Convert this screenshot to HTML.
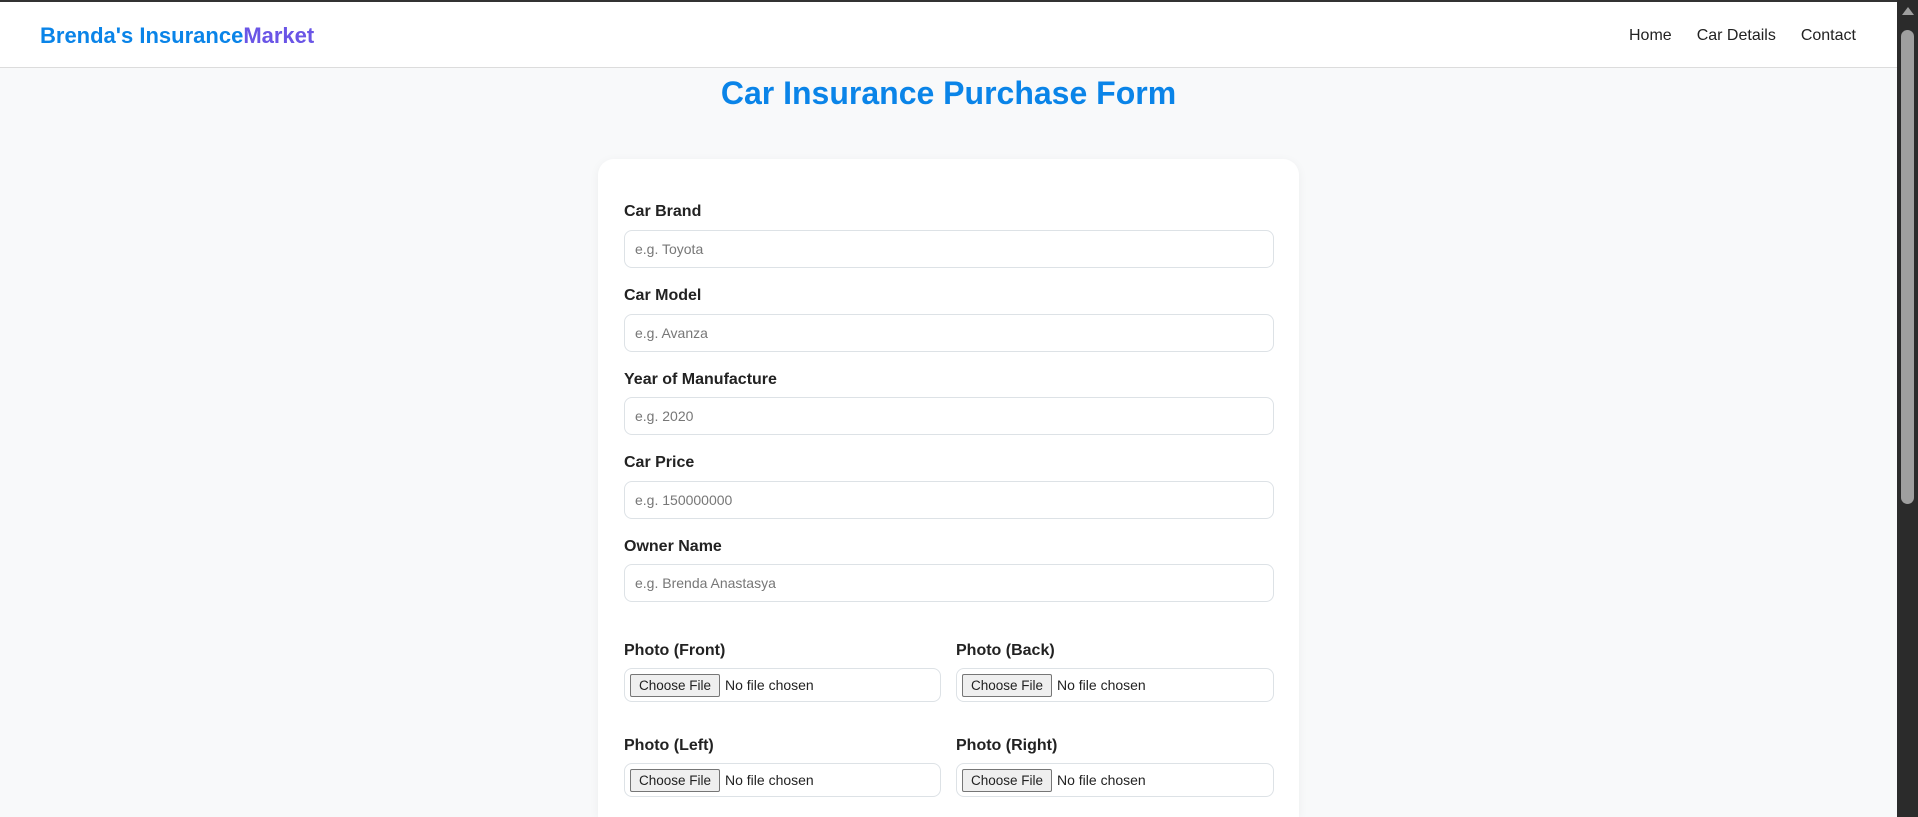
<!DOCTYPE html>
<html><head><meta charset="utf-8"><style>
*{box-sizing:border-box;margin:0;padding:0}
html,body{width:1918px;height:817px;overflow:hidden;background:#f8f9fa;font-family:"Liberation Sans",Arial,sans-serif;color:#222}
.topbar{position:absolute;left:0;top:0;width:1897px;height:2px;background:#333}
nav{position:absolute;left:0;top:2px;width:1897px;height:66px;background:#fff;border-bottom:1px solid #dcdcdc}
.logo{position:absolute;left:40px;top:21px;font-size:22px;font-weight:bold;color:#0a84e8}
.logo span{color:#6a55e6}
.links{position:absolute;top:25px;left:1629px;font-size:16px;color:#222}
.links span{margin-right:25px}
h1{position:absolute;left:0;width:1897px;top:75px;text-align:center;font-size:32px;color:#0a84e8;font-weight:bold}
.card{position:absolute;left:598px;top:159px;width:701px;height:658px;background:#fff;border-radius:16px 16px 0 0;box-shadow:0 2px 10px rgba(0,0,0,.05)}
.lbl{position:absolute;font-size:16px;font-weight:bold;color:#222}
.inp{position:absolute;height:38px;border:1px solid #dde2e6;border-radius:8px;font-size:14px;color:#777;padding:11px 10px;line-height:14px}
.file{position:absolute;height:34px;border:1px solid #dde2e6;border-radius:8px;font-size:14px;color:#222}
.btn{position:absolute;left:5px;top:5px;height:23px;width:90px;border:1px solid #767676;background:#efefef;border-radius:2px;font-size:13.5px;text-align:center;line-height:21px}
.nf{position:absolute;left:100px;top:8px;font-size:14px}
.sb{position:absolute;left:1897px;top:0;width:21px;height:817px;background:#2b2b2b}
.thumb{position:absolute;left:4px;top:30px;width:13px;height:474px;background:#9f9f9f;border-radius:7px}
.arr{position:absolute;left:5px;top:7px;width:0;height:0;border-left:6px solid transparent;border-right:6px solid transparent;border-bottom:8px solid #9f9f9f}
</style></head><body>
<div class="topbar"></div>
<nav><div class="logo">Brenda's Insurance<span>Market</span></div>
<div class="links"><span>Home</span><span>Car Details</span>Contact</div></nav>
<h1>Car Insurance Purchase Form</h1>
<div class="card">
<div class="lbl" style="left:26px;top:44px">Car Brand</div>
<div class="inp" style="left:26px;top:71px;width:650px">e.g. Toyota</div>
<div class="lbl" style="left:26px;top:128px">Car Model</div>
<div class="inp" style="left:26px;top:155px;width:650px">e.g. Avanza</div>
<div class="lbl" style="left:26px;top:212px">Year of Manufacture</div>
<div class="inp" style="left:26px;top:238px;width:650px">e.g. 2020</div>
<div class="lbl" style="left:26px;top:295px">Car Price</div>
<div class="inp" style="left:26px;top:322px;width:650px">e.g. 150000000</div>
<div class="lbl" style="left:26px;top:379px">Owner Name</div>
<div class="inp" style="left:26px;top:405px;width:650px">e.g. Brenda Anastasya</div>
<div class="lbl" style="left:26px;top:483px">Photo (Front)</div>
<div class="file" style="left:26px;top:509px;width:317px"><div class="btn">Choose File</div><div class="nf">No file chosen</div></div>
<div class="lbl" style="left:358px;top:483px">Photo (Back)</div>
<div class="file" style="left:358px;top:509px;width:318px"><div class="btn">Choose File</div><div class="nf">No file chosen</div></div>
<div class="lbl" style="left:26px;top:578px">Photo (Left)</div>
<div class="file" style="left:26px;top:604px;width:317px"><div class="btn">Choose File</div><div class="nf">No file chosen</div></div>
<div class="lbl" style="left:358px;top:578px">Photo (Right)</div>
<div class="file" style="left:358px;top:604px;width:318px"><div class="btn">Choose File</div><div class="nf">No file chosen</div></div>
</div>
<div class="sb"><div class="arr"></div><div class="thumb"></div></div>
</body></html>
